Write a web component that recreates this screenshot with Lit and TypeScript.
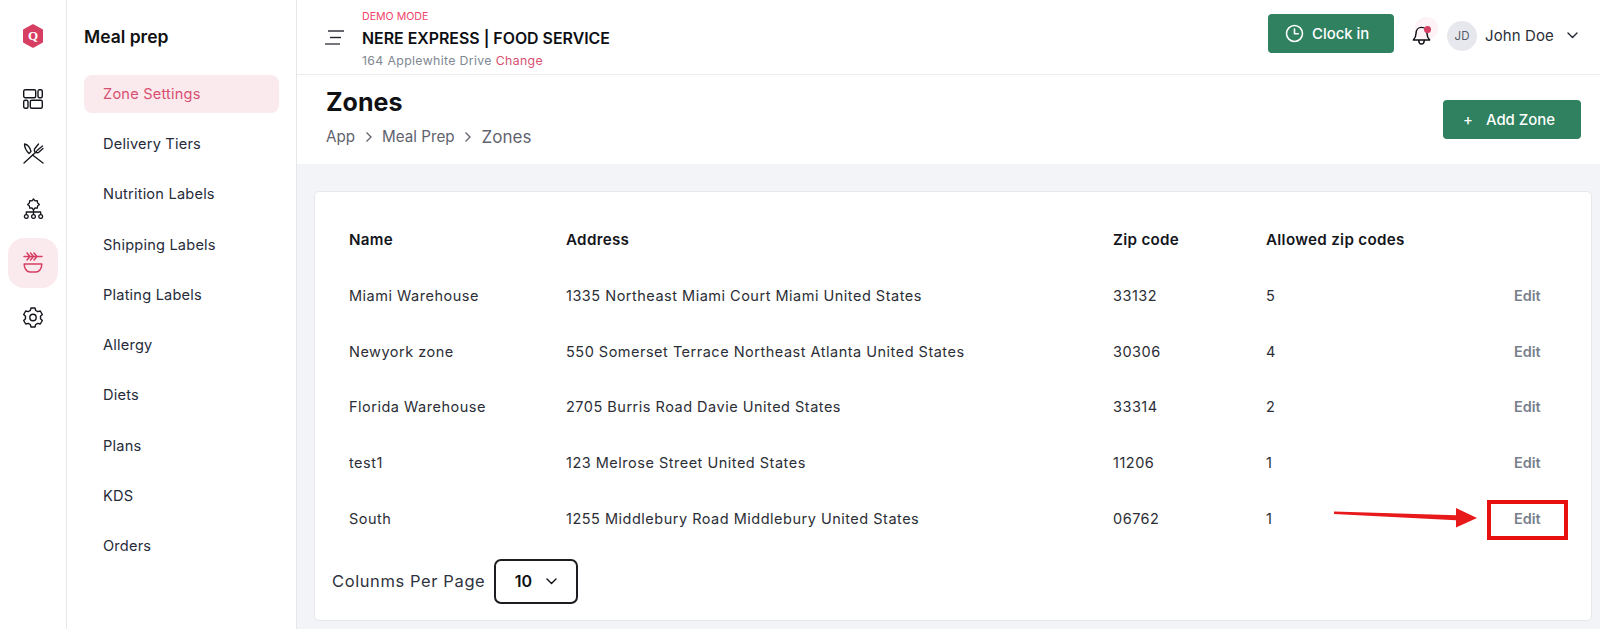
import { LitElement, html, css, svg } from "lit";
import { customElement } from "lit/decorators.js";

const rows = [
  ["Miami Warehouse", "1335 Northeast Miami Court Miami United States", "33132", "5"],
  ["Newyork zone", "550 Somerset Terrace Northeast Atlanta United States", "30306", "4"],
  ["Florida Warehouse", "2705 Burris Road Davie United States", "33314", "2"],
  ["test1", "123 Melrose Street United States", "11206", "1"],
  ["South", "1255 Middlebury Road Middlebury United States", "06762", "1"],
];
const menu = ["Zone Settings", "Delivery Tiers", "Nutrition Labels", "Shipping Labels", "Plating Labels", "Allergy", "Diets", "Plans", "KDS", "Orders"];
const chev = svg`<path d="M2 4l4.500 4.500L11 4" fill="none" stroke="currentColor" stroke-width="1.400" stroke-linecap="round" stroke-linejoin="round"/>`;

@customElement("app-root")
export class AppRoot extends LitElement {
  static styles = css`
    :host { display: flex; width: 1600px; height: 629px; overflow: hidden; background: #fff; font-family: Inter, "Liberation Sans", sans-serif; color: #1f2430; }
    * { box-sizing: border-box; }
    svg { display: block; }
    .rail { width: 67px; flex: none; border-right: 1px solid #e6e7ea; display: flex; flex-direction: column; align-items: center; padding-top: 24px; }
    .rail .ic { width: 50px; height: 50px; border-radius: 16px; display: flex; align-items: center; justify-content: center; margin-bottom: 4.500px; color: #14161c; flex: none; }
    .rail .ic.logo { height: 24px; margin-bottom: 26px; }
    .rail .ic.active { background: #faeaee; color: #d63e62; }
    .side { width: 230px; flex: none; border-right: 1px solid #e6e7ea; padding: 0 17px; }
    .side h2 { margin: 0; font-size: 17.500px; font-weight: 600; color: #111; height: 75px; line-height: 73px; }
    .side a { display: flex; align-items: center; height: 37.500px; margin-bottom: 12.750px; padding-left: 19px; font-size: 14.600px; border-radius: 8px; color: #262b3a; letter-spacing: .2px; }
    .side a.on { background: #faeaee; color: #d94f70; }
    main { flex: 1; min-width: 0; display: flex; flex-direction: column; background: #f3f4f8; }
    .top { height: 75px; flex: none; background: #fff; border-bottom: 1px solid #ececee; display: flex; align-items: center; padding: 0 21px 0 28px; }
    .burger { width: 20px; margin-right: 17px; }
    .org { flex: 1; display: flex; flex-direction: column; }
    .demo { font-size: 10.600px; line-height: 12px; color: #f0426a; margin-top: 4px; }
    .name { font-size: 15.900px; font-weight: 600; color: #0d0f14; line-height: 20px; margin-top: 6px; }
    .addr { font-size: 12.300px; line-height: 14px; color: #808792; margin-top: 5px; letter-spacing: .35px; }
    .addr span { color: #d94f70; }
    .btn { background: #2f8160; color: #fff; border-radius: 4px; height: 39px; display: flex; align-items: center; font-weight: 500; font-size: 14.900px; }
    .clock { width: 126px; padding-left: 17px; gap: 8px; margin-right: 15px; margin-top: -7px; }
    .bell { position: relative; width: 30px; height: 30px; margin-right: 8px; }
    .bell .halo { position: absolute; left: 6px; top: -5px; width: 23px; height: 23px; border-radius: 50%; background: #fdf2f5; }
    .bell svg { position: absolute; left: 3px; top: 4px; }
    .bell .dot { position: absolute; left: 15px; top: 4px; width: 7px; height: 7px; border-radius: 50%; background: #d63e62; }
    .avatar { width: 30px; height: 30px; border-radius: 50%; background: #e7e8ee; color: #555b68; font-size: 11.500px; display: flex; align-items: center; justify-content: center; margin-right: 8px; margin-top: -3px; }
    .user { font-size: 15px; color: #2c2f38; margin-right: 12px; width: 69px; letter-spacing: .1px; margin-top: -3px; white-space: nowrap; }
    .chev { margin-top: -3px; }
    .head { height: 89px; flex: none; background: #fff; display: flex; justify-content: space-between; padding: 11px 19px 0 29px; }
    .head h1 { margin: 0; font-size: 25px; font-weight: 700; color: #101114; line-height: 32px; }
    .crumbs { display: flex; align-items: center; gap: 9.500px; margin-top: 8px; font-size: 15.200px; color: #5f636e; line-height: 22px; }
    .crumbs .last { font-size: 17px; }
    .add { width: 138px; justify-content: center; gap: 13px; margin-top: 14px; padding-right: 6px; }
    .content { flex: 1; padding: 27px 8px 8px 17px; min-height: 0; }
    .card { position: relative; height: 100%; background: #fff; border: 1px solid #e7e8ec; border-radius: 5px; padding: 18px 0 0; }
    .row { display: grid; grid-template-columns: 217px 547px 153px 248px 1fr; height: 55.600px; align-items: center; padding-left: 34px; font-size: 14.500px; color: #2b2e36; letter-spacing: .5px; white-space: nowrap; }
    .row.hd { height: 58px; font-weight: 600; font-size: 15.200px; letter-spacing: .3px; color: #14161c; }
    .edit { font-weight: 600; font-size: 14.500px; letter-spacing: 0; color: #78808c; }
    .foot { display: flex; align-items: center; gap: 9px; padding: 0 0 0 17px; margin-top: 13px; }
    .foot .lbl { font-size: 16.500px; letter-spacing: .6px; color: #2f3340; white-space: nowrap; }
    .sel { width: 84px; height: 45px; border: 2px solid #1c1d20; border-radius: 7px; display: flex; align-items: center; justify-content: center; gap: 13px; font-weight: 600; font-size: 16px; color: #0d0f14; }
    .mark { position: absolute; left: 1172px; top: 308px; width: 81px; height: 40px; border: 4px solid #e8100f; }
    .arrow { position: absolute; left: 1019px; top: 308px; }
  `;

  render() {
    return html`
      <nav class="rail">
        <div class="ic logo">
          <svg width="22" height="24" viewBox="0 0 22 24"><path d="M11 1.200l9 5v11.600l-9 5-9-5V6.200z" fill="#d63e62" stroke="#d63e62" stroke-width="2" stroke-linejoin="round"/><text x="11" y="16" text-anchor="middle" font-family="Liberation Serif, serif" font-weight="700" font-size="13" fill="#fff">Q</text></svg>
        </div>
        <div class="ic">
          <svg width="20" height="20" viewBox="0 0 20 20" fill="none" stroke="currentColor" stroke-width="1.400"><rect x=".7" y=".7" width="12" height="8" rx="1.500"/><rect x="15" y=".7" width="4.300" height="8" rx="1.500"/><rect x=".7" y="11.300" width="4.300" height="8" rx="1.500"/><rect x="7.300" y="11.300" width="12" height="8" rx="1.500"/></svg>
        </div>
        <div class="ic">
          <svg width="21" height="21" viewBox="0 0 21 21" fill="none" stroke="currentColor" stroke-width="1.300" stroke-linecap="round" stroke-linejoin="round"><path d="M1 20L13.500 8.500M14 7.500L19.500 3M11.500 6L15.500 1M15.500 9.500L20 5.500M11.500 6c-.5 2 0 3 1.500 3.500s3 0 3.500-1"/><path d="M1.500 1c3 .5 5.500 3.500 6.500 7.500L6 10.500C3.500 8 1.500 5 1.500 1zM9.500 12L20 20"/></svg>
        </div>
        <div class="ic">
          <svg width="21" height="21" viewBox="0 0 21 21" fill="none" stroke="currentColor" stroke-width="1.300" stroke-linejoin="round"><path d="M10.500 1l1.500 1.800 2.300-.2.300 2.300 1.800 1.500-1.800 1.500-.3 2.300-2.300-.2-1.500 1.800L9 10l-2.300.2-.3-2.300-1.800-1.500 1.800-1.500.3-2.300L9 2.800z"/><path d="M10.500 11.500V14M3.300 17v-3h14.400v3M10.500 14v3"/><circle cx="3.300" cy="18.500" r="1.900"/><circle cx="10.500" cy="18.500" r="1.900"/><circle cx="17.700" cy="18.500" r="1.900"/></svg>
        </div>
        <div class="ic active">
          <svg width="20" height="21" viewBox="0 0 20 21" fill="none" stroke="currentColor" stroke-width="1.500" stroke-linecap="round" stroke-linejoin="round"><path d="M1 4.500H19M4 1l3 3.500L4 8M7.500 1l3 3.500-3 3.500M11 1l3 3.500L11 8"/><path d="M1.200 12h17.600c0 4.500-2.500 8-6 8H7.200c-3.500 0-6-3.500-6-8z"/></svg>
        </div>
        <div class="ic">
          <svg width="20" height="21" viewBox="0 0 20 21" fill="none" stroke="currentColor" stroke-width="1.400" stroke-linejoin="round"><path d="M8 1h4l.7 2.500 2.100 1.200 2.500-.7 2 3.500-1.800 1.800v2.400l1.800 1.800-2 3.500-2.500-.7-2.100 1.200L12 20H8l-.7-2.500-2.100-1.200-2.500.7-2-3.500 1.800-1.800V9.300L.7 7.500l2-3.500 2.500.7 2.100-1.200z"/><circle cx="10" cy="10.500" r="3.200"/></svg>
        </div>
      </nav>
      <aside class="side">
        <h2>Meal prep</h2>
        ${menu.map((m, i) => html`<a class=${i === 0 ? "on" : ""}>${m}</a>`)}
      </aside>
      <main>
        <header class="top">
          <svg class="burger" width="20" height="15" viewBox="0 0 20 15" stroke-width="1.400"><path d="M3 1h16" stroke="#23262e"/><path d="M5 7.500h11" stroke="#23262e"/><path d="M0 14h15" stroke="#3a3d45"/></svg>
          <div class="org">
            <div class="demo">DEMO MODE</div>
            <div class="name">NERE EXPRESS | FOOD SERVICE</div>
            <div class="addr">164 Applewhite Drive <span>Change</span></div>
          </div>
          <div class="btn clock">
            <svg width="19" height="19" viewBox="0 0 19 19" fill="none" stroke="#fff" stroke-width="1.600" stroke-linecap="round" stroke-linejoin="round"><circle cx="9.500" cy="9.500" r="8"/><path d="M9.500 5v4.800h3.800"/></svg>
            Clock in
          </div>
          <div class="bell">
            <span class="halo"></span>
            <svg width="19" height="20" viewBox="0 0 20 22" fill="none" stroke="#0d0f14" stroke-width="1.600" stroke-linecap="round" stroke-linejoin="round"><path d="M10 1.500c-3.800 0-6 3-6 6.500 0 3.500-1 5.500-3 7.500h18c-2-2-3-4-3-7.500 0-3.500-2.200-6.500-6-6.500zM7 16c0 5 6 5 6 0"/></svg>
            <span class="dot"></span>
          </div>
          <div class="avatar">JD</div>
          <div class="user">John Doe</div>
          <svg class="chev" width="13" height="13" viewBox="0 0 13 13">${chev}</svg>
        </header>
        <section class="head">
          <div>
            <h1>Zones</h1>
            <div class="crumbs">
              <span>App</span>
              <svg width="8" height="12" viewBox="0 0 8 12" fill="none" stroke="currentColor" stroke-width="1.300"><path d="M1.500 1.500L6 6l-4.500 4.500"/></svg>
              <span>Meal Prep</span>
              <svg width="8" height="12" viewBox="0 0 8 12" fill="none" stroke="currentColor" stroke-width="1.300"><path d="M1.500 1.500L6 6l-4.500 4.500"/></svg>
              <span class="last">Zones</span>
            </div>
          </div>
          <div class="btn add"><span>+</span><span>Add Zone</span></div>
        </section>
        <div class="content">
          <div class="card">
            <div class="row hd"><span>Name</span><span>Address</span><span>Zip code</span><span>Allowed zip codes</span><span></span></div>
            ${rows.map((r) => html`<div class="row"><span>${r[0]}</span><span>${r[1]}</span><span>${r[2]}</span><span>${r[3]}</span><span class="edit">Edit</span></div>`)}
            <div class="foot">
              <span class="lbl">Colunms Per Page</span>
              <div class="sel">10 <svg width="13" height="13" viewBox="0 0 13 13">${chev}</svg></div>
            </div>
            <div class="mark"></div>
            <svg class="arrow" width="145" height="36" viewBox="0 0 145 36"><path d="M0 11.500L122 15.200V8l21 10-21 9.500v-7.300L0 14z" fill="#e8191a"/></svg>
          </div>
        </div>
      </main>
    `;
  }
}
